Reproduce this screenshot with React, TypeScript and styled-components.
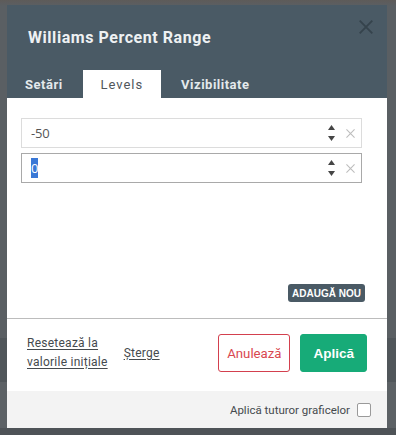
import React from "react";
import styled, { createGlobalStyle } from "styled-components";

const Global = createGlobalStyle`
  html, body {
    margin: 0;
    padding: 0;
  }
  body {
    width: 396px;
    height: 435px;
    overflow: hidden;
    background: linear-gradient(
      to bottom,
      #5e5b59 0px,
      #5a5f63 6px,
      #5a5f63 338px,
      #50565a 338px,
      #50565a 382px,
      #5c6165 382px,
      #5c6165 428px,
      #4e5357 428px
    );
    font-family: Roboto, "Liberation Sans", Arial, sans-serif;
  }
`;

const Page = styled.div`
  padding: 5px 9px 7px 7px;
`;

const Modal = styled.div`
  width: 380px;
  background: #fff;
  display: flex;
  flex-direction: column;
`;

const Header = styled.div`
  background: #4a5a65;
  display: flex;
  flex-direction: column;
`;

const TitleRow = styled.div`
  display: flex;
  justify-content: space-between;
  align-items: flex-start;
  padding: 23px 13px 22px 21px;
`;

const Title = styled.h1`
  margin: 0;
  font-family: Roboto, "Liberation Sans", sans-serif;
  font-size: 16px;
  line-height: 20px;
  font-weight: 700;
  letter-spacing: 0.55px;
  color: #eef1f3;
`;

const CloseButton = styled.button`
  margin-top: -9px;
  width: 16px;
  height: 16px;
  padding: 0;
  border: none;
  background: transparent;
  display: flex;
  align-items: center;
  justify-content: center;
  cursor: pointer;
`;

const Tabs = styled.div`
  display: flex;
  gap: 2px;
  height: 28px;
`;

const Tab = styled.div<{ $active?: boolean }>`
  display: flex;
  align-items: center;
  padding: 1px 18px 0;
  font-size: 13px;
  font-weight: ${(p) => (p.$active ? 400 : 700)};
  letter-spacing: ${(p) => (p.$active ? "0.95px" : "0.5px")};
  color: ${(p) => (p.$active ? "#50565b" : "#e4e9ec")};
  background: ${(p) => (p.$active ? "#fff" : "transparent")};
`;

const Content = styled.div`
  height: 220px;
  box-sizing: border-box;
  padding: 20px 22px 16px 14px;
  display: flex;
  flex-direction: column;
`;

const LevelList = styled.div`
  display: flex;
  flex-direction: column;
  gap: 5px;
  margin-right: 3px;
`;

const LevelField = styled.div<{ $focused?: boolean }>`
  height: 30px;
  box-sizing: border-box;
  border: 1px solid ${(p) => (p.$focused ? "#a9a9a9" : "#dcdcdc")};
  display: flex;
  align-items: center;
  padding: 0 6px 0 9px;
`;

const LevelValue = styled.div`
  flex: 1;
  font-family: "Open Sans", "Liberation Sans", sans-serif;
  font-size: 13px;
  color: #555;
  letter-spacing: -0.2px;
`;

const Selected = styled.span`
  background: #3a78d6;
  color: #fff;
  padding: 1px 0;
`;

const Spinner = styled.div`
  display: flex;
  flex-direction: column;
  align-items: center;
  gap: 6px;
  margin-right: 11px;
`;

const Remove = styled.div`
  width: 9px;
  height: 9px;
  display: flex;
`;

const AddRow = styled.div`
  margin-top: auto;
  display: flex;
  justify-content: flex-end;
`;

const AddButton = styled.button`
  height: 18px;
  padding: 0 4px;
  border: none;
  border-radius: 3px;
  background: #4a5a65;
  color: #fff;
  font-family: "Liberation Sans", Arial, sans-serif;
  font-size: 10px;
  font-weight: 700;
  cursor: pointer;
`;

const Divider = styled.div`
  height: 1px;
  background: #bcbcbc;
`;

const Footer = styled.div`
  display: flex;
  align-items: center;
  justify-content: space-between;
  padding: 15px 20px 19px 20px;
`;

const Links = styled.div`
  display: flex;
  align-items: center;
  gap: 16px;
`;

const LinkText = styled.a`
  font-size: 12px;
  line-height: 19px;
  letter-spacing: 0.25px;
  color: #454a4e;
  text-decoration: underline;
  text-underline-offset: 2px;
  cursor: pointer;
`;

const Buttons = styled.div`
  display: flex;
  gap: 10px;
`;

const ActionButton = styled.button<{ $primary?: boolean }>`
  height: 38px;
  box-sizing: border-box;
  padding: 0 ${(p) => (p.$primary ? "12px" : "8px")};
  border-radius: 3px;
  border: 1px solid ${(p) => (p.$primary ? "#17ab78" : "#d3404e")};
  background: ${(p) => (p.$primary ? "#17ab78" : "#fff")};
  color: ${(p) => (p.$primary ? "#fff" : "#d9474f")};
  font-family: ${(p) =>
    p.$primary ? `"Liberation Sans", Arial, sans-serif` : `Roboto, sans-serif`};
  font-size: ${(p) => (p.$primary ? "13.5px" : "13.2px")};
  font-weight: ${(p) => (p.$primary ? 700 : 400)};
  cursor: pointer;
`;

const BottomBar = styled.div`
  height: 37px;
  background: #f3f3f3;
  display: flex;
  align-items: center;
  justify-content: flex-end;
  gap: 7px;
  padding-right: 16px;
`;

const BottomLabel = styled.span`
  font-size: 11.5px;
  color: #454a4e;
`;

const Checkbox = styled.span`
  width: 14px;
  height: 14px;
  box-sizing: border-box;
  border: 1px solid #9a9a9a;
  border-radius: 2px;
  background: #fff;
`;

const Up = () => (
  <svg width="7" height="5" viewBox="0 0 7 5">
    <path d="M3.5 0 L7 5 L0 5 Z" fill="#454545" />
  </svg>
);
const Down = () => (
  <svg width="7" height="5" viewBox="0 0 7 5">
    <path d="M0 0 L7 0 L3.5 5 Z" fill="#454545" />
  </svg>
);
const XIcon = ({ size, color, w }: { size: number; color: string; w: number }) => (
  <svg width={size} height={size} viewBox="0 0 10 10">
    <path d="M0.5 0.5 L9.5 9.5 M9.5 0.5 L0.5 9.5" stroke={color} strokeWidth={w} />
  </svg>
);

const levels = [
  { value: "-50", focused: false },
  { value: "0", focused: true },
];

export default function App() {
  return (
    <>
      <Global />
      <Page>
        <Modal>
          <Header>
            <TitleRow>
              <Title>Williams Percent Range</Title>
              <CloseButton aria-label="close">
                <XIcon size={14} color="#35434c" w={1.3} />
              </CloseButton>
            </TitleRow>
            <Tabs>
              <Tab>Setări</Tab>
              <Tab $active>Levels</Tab>
              <Tab>Vizibilitate</Tab>
            </Tabs>
          </Header>
          <Content>
            <LevelList>
              {levels.map((l) => (
                <LevelField key={l.value} $focused={l.focused}>
                  <LevelValue>
                    {l.focused ? <Selected>{l.value}</Selected> : l.value}
                  </LevelValue>
                  <Spinner>
                    <Up />
                    <Down />
                  </Spinner>
                  <Remove>
                    <XIcon size={9} color="#bdbdbd" w={1.2} />
                  </Remove>
                </LevelField>
              ))}
            </LevelList>
            <AddRow>
              <AddButton>ADAUGĂ NOU</AddButton>
            </AddRow>
          </Content>
          <Divider />
          <Footer>
            <Links>
              <LinkText>
                Resetează la
                <br />
                valorile inițiale
              </LinkText>
              <LinkText>Șterge</LinkText>
            </Links>
            <Buttons>
              <ActionButton>Anulează</ActionButton>
              <ActionButton $primary>Aplică</ActionButton>
            </Buttons>
          </Footer>
          <BottomBar>
            <BottomLabel>Aplică tuturor graficelor</BottomLabel>
            <Checkbox />
          </BottomBar>
        </Modal>
      </Page>
    </>
  );
}
